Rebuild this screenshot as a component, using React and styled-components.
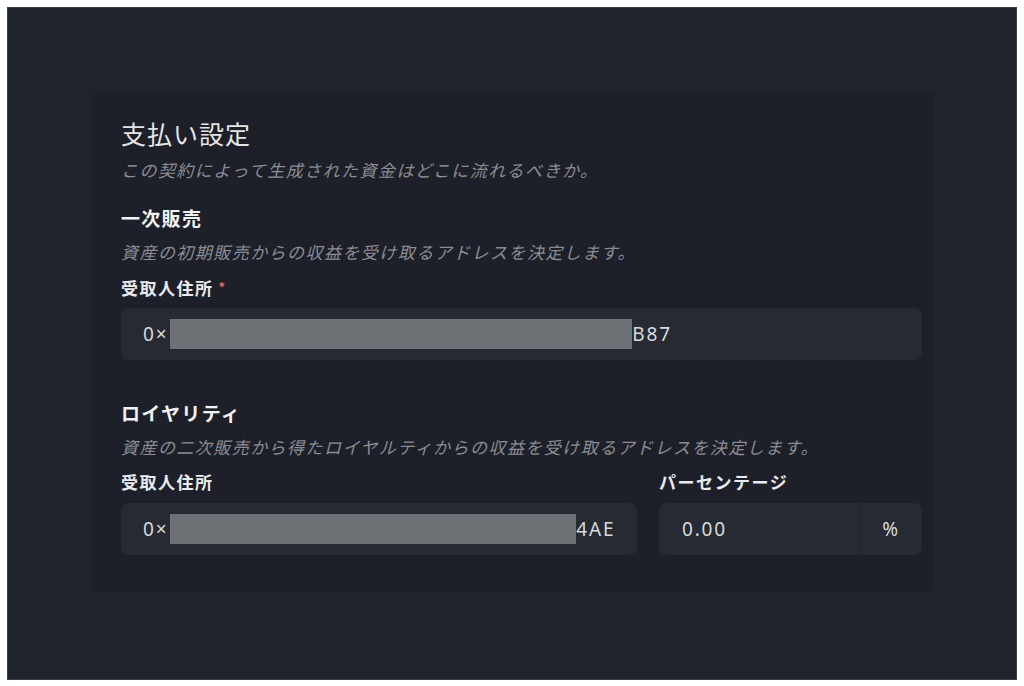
import React from "react";
import styled, { createGlobalStyle } from "styled-components";

const GlobalStyle = createGlobalStyle`
    html, body {
        margin: 0;
        padding: 0;
        background: #ffffff;
    }
    body {
        font-family: "Noto Sans CJK JP", "Noto Sans", sans-serif;
    }
`;

const Frame = styled.div`
    margin: 7px;
    width: 1008px;
    height: 671px;
    background: #1f232b;
    border: 1px solid #3a3e46;
    box-sizing: content-box;
    display: flex;
    flex-direction: column;
`;

const Panel = styled.section`
    margin: 84px 0 0 84px;
    width: 842px;
    padding: 26px 12px 36px 29px;
    box-sizing: border-box;
    background: #1d2028;
    display: flex;
    flex-direction: column;
`;

const Title = styled.h1`
    margin: 0;
    font-size: 25px;
    line-height: 30px;
    font-weight: 400;
    letter-spacing: 1px;
    color: #e4e5e7;
`;

const Hint = styled.p`
    margin: ${(p) => p.$top || 11}px 0 0;
    font-size: 17px;
    line-height: 22px;
    font-style: italic;
    letter-spacing: 1.45px;
    color: #8a8d93;
`;

const Heading = styled.h2`
    margin: ${(p) => p.$top}px 0 0;
    font-size: 19px;
    line-height: 24px;
    font-weight: 700;
    letter-spacing: 1.3px;
    color: #f1f2f3;
`;

const Label = styled.label`
    display: block;
    margin: 14px 0 0;
    font-size: 17px;
    line-height: 20px;
    font-weight: 700;
    letter-spacing: 1.5px;
    color: #e9eaec;
`;

const Required = styled.span`
    color: #e36d6d;
    font-size: 13px;
    vertical-align: 3px;
    margin-left: 5px;
`;

const Field = styled.div`
    margin-top: ${(p) => p.$top || 10}px;
    height: 52px;
    border-radius: 8px;
    background: #262a33;
    display: flex;
    align-items: center;
    padding-left: 22px;
    font-size: 19px;
    letter-spacing: 1.8px;
    color: #d9dadc;
    font-family: "Noto Sans", sans-serif;
    overflow: hidden;
`;

const Redact = styled.span`
    display: inline-block;
    height: 30px;
    background: #6e7176;
    margin-left: 2px;
`;

const Row = styled.div`
    display: grid;
    grid-template-columns: 516px 263px;
    column-gap: 22px;
`;

const Column = styled.div`
    display: flex;
    flex-direction: column;
`;

const Percent = styled.div`
    margin-top: 11px;
    height: 52px;
    border-radius: 8px;
    background: #262a33;
    display: grid;
    grid-template-columns: 1fr 63px;
    font-family: "Noto Sans", sans-serif;
    font-size: 19px;
    letter-spacing: 1.8px;
    color: #d9dadc;
    overflow: hidden;
`;

const PercentValue = styled.div`
    display: flex;
    align-items: center;
    padding-left: 23px;
`;

const Suffix = styled.div`
    display: flex;
    align-items: center;
    justify-content: center;
    border-left: 1px solid #1e2128;
`;

const Address = ({ width, tail, top }) => (
    <Field $top={top}>
        <span>0×</span>
        <Redact style={{ width }} />
        <span>{tail}</span>
    </Field>
);

export default function App() {
    return (
        <>
            <GlobalStyle />
            <Frame>
                <Panel>
                    <Title>支払い設定</Title>
                    <Hint>この契約によって生成された資金はどこに流れるべきか。</Hint>

                    <Heading $top={25}>一次販売</Heading>
                    <Hint>資産の初期販売からの収益を受け取るアドレスを決定します。</Hint>
                    <Label>
                        受取人住所<Required>*</Required>
                    </Label>
                    <Address width={462} tail="B87" />

                    <Heading $top={41}>ロイヤリティ</Heading>
                    <Hint>資産の二次販売から得たロイヤルティからの収益を受け取るアドレスを決定します。</Hint>
                    <Row>
                        <Column>
                            <Label>受取人住所</Label>
                            <Address width={406} tail="4AE" top={11} />
                        </Column>
                        <Column>
                            <Label>パーセンテージ</Label>
                            <Percent>
                                <PercentValue>0.00</PercentValue>
                                <Suffix>%</Suffix>
                            </Percent>
                        </Column>
                    </Row>
                </Panel>
            </Frame>
        </>
    );
}
